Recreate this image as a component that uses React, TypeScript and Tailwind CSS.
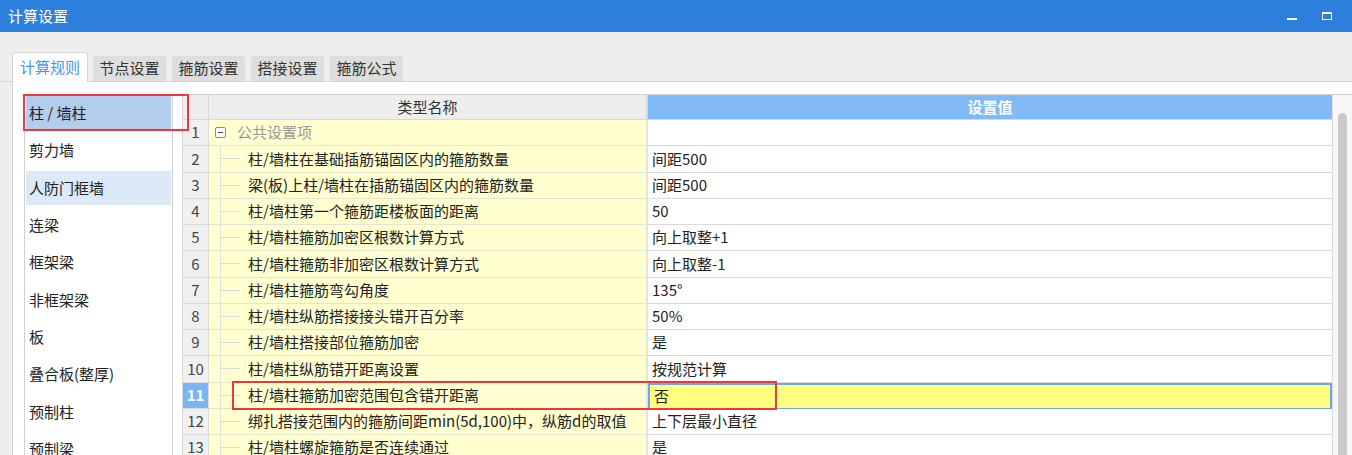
const items = ["柱 / 墙柱", "剪力墙", "人防门框墙", "连梁", "框架梁", "非框架梁", "板", "叠合板(整厚)", "预制柱", "预制梁"];

const rows: [string, string][] = [
  ["柱/墙柱在基础插筋锚固区内的箍筋数量", "间距500"],
  ["梁(板)上柱/墙柱在插筋锚固区内的箍筋数量", "间距500"],
  ["柱/墙柱第一个箍筋距楼板面的距离", "50"],
  ["柱/墙柱箍筋加密区根数计算方式", "向上取整+1"],
  ["柱/墙柱箍筋非加密区根数计算方式", "向上取整-1"],
  ["柱/墙柱箍筋弯勾角度", "135°"],
  ["柱/墙柱纵筋搭接接头错开百分率", "50%"],
  ["柱/墙柱搭接部位箍筋加密", "是"],
  ["柱/墙柱纵筋错开距离设置", "按规范计算"],
  ["柱/墙柱箍筋加密范围包含错开距离", "否"],
  ["绑扎搭接范围内的箍筋间距min(5d,100)中，纵筋d的取值", "上下层最小直径"],
  ["柱/墙柱螺旋箍筋是否连续通过", "是"],
];

const tabs = ["节点设置", "箍筋设置", "搭接设置", "箍筋公式"];

export default function App() {
  return (
    <div className="relative w-[1352px] h-[455px] overflow-hidden bg-[#eeeeee] text-[#222] font-['Noto_Sans_CJK_SC','Noto_Sans',sans-serif] text-[14px]">
      {/* title bar */}
      <div className="h-[32px] bg-[#2c7fdd] flex items-center justify-between pl-[8px] pr-[20px] text-white text-[15px]">
        <span>计算设置</span>
        <div className="flex items-center gap-[25px]">
          <div className="w-[10px] h-[2px] bg-white mt-[6px]" />
          <div className="w-[10px] h-[8px] border border-white border-t-2" />
        </div>
      </div>

      {/* tabs */}
      <div className="flex items-end pl-[12px] h-[50px] border-b border-[#d4d4d4]">
        <div className="h-[30px] w-[76px] bg-white border border-b-0 border-[#d6d6d6] rounded-t-[3px] flex items-center justify-center text-[#4596ee] text-[15px] -mb-px">
          计算规则
        </div>
        <div className="flex gap-[6px] ml-[5px]">
          {tabs.map((t) => (
            <div key={t} className="h-[25px] w-[73px] bg-[#dedede] rounded-t-[3px] flex items-center justify-center text-[#333] text-[15px]">
              {t}
            </div>
          ))}
        </div>
      </div>

      {/* content */}
      <div className="ml-[12px] h-[373px] bg-white border-l border-[#d4d4d4] flex pl-[11px] pt-[12px]">
        {/* left list */}
        <div className="w-[149px] border-x border-[#d0d0d0] flex flex-col gap-[3.4px] pt-[2px] px-px">
          {items.map((it, i) => (
            <div
              key={it}
              className={`h-[34px] shrink-0 flex items-center pl-[3px] text-[15px] ${i === 0 ? "bg-[#b3cdee]" : i === 2 ? "bg-[#dce9f9]" : ""}`}
            >
              {it}
            </div>
          ))}
        </div>

        {/* table */}
        <div className="ml-[9px] flex-1 flex border-t border-[#d0d0d0]">
          <div className="flex-1 flex flex-col">
            {/* header */}
            <div className="h-[25px] shrink-0 grid grid-cols-[27px_439px_1fr] border-b border-[#d8d8d8]">
              <div className="bg-[#eeeeee] border-x border-[#d8d8d8]" />
              <div className="bg-[#eeeeee] border-r-2 border-[#d8d8d8] flex items-center justify-center text-[#333] text-[15px]">类型名称</div>
              <div className="bg-[#80bbf7] flex items-center justify-center text-white text-[15px] font-bold">设置值</div>
            </div>
            {/* row 1 */}
            <div className="h-[26.25px] shrink-0 grid grid-cols-[27px_439px_1fr]">
              <div className="bg-[#f0f0f0] border-x border-b border-[#dadada] flex items-center justify-center text-[15px] text-[#444]">1</div>
              <div className="bg-[#ffffd0] border-r-2 border-b border-[#e4e4d0] flex items-center pl-[6px]">
                <div className="w-[11px] h-[11px] border border-[#888] rounded-[2px] flex items-center justify-center bg-white">
                  <div className="w-[5px] h-px bg-[#444]" />
                </div>
                <span className="ml-[11px] text-[#999] text-[15px]">公共设置项</span>
              </div>
              <div className="bg-white border-b border-[#dadada]" />
            </div>
            {rows.map(([name, val], i) => {
              const n = i + 2;
              const sel = n === 11;
              return (
                <div key={n} className="h-[26.25px] shrink-0 grid grid-cols-[27px_439px_1fr]">
                  <div className={`border-x border-b border-[#dadada] flex items-center justify-center text-[15px] ${sel ? "bg-[#7ab6f4] text-white font-bold" : "bg-[#f0f0f0] text-[#444]"}`}>
                    {n}
                  </div>
                  <div className="bg-[#ffffd0] border-r-2 border-b border-[#e4e4d0] flex items-stretch pl-[11px]">
                    <div className="w-[20px] border-l border-[#e0e0e0] flex items-center">
                      <div className="w-full h-px bg-[#d8d8d8]" />
                    </div>
                    <span className="ml-[8px] flex items-center text-[15px] whitespace-nowrap">{name}</span>
                  </div>
                  <div className={`flex items-center pl-[4px] text-[15px] border-b ${sel ? "bg-[#ffff80] border-2 border-[#6aa7e8]" : "bg-white border-[#dadada]"}`}>
                    {val}
                  </div>
                </div>
              );
            })}
          </div>
          {/* scrollbar */}
          <div className="w-[20px] bg-[#f7f7f7] border-l border-[#dcdcdc] pt-[18px] flex justify-center">
            <div className="w-[9px] h-full bg-[#c9c9c9] rounded-t-full" />
          </div>
        </div>
      </div>

      {/* highlight boxes */}
      <div className="absolute left-[23px] top-[94px] w-[166px] h-[37px] border-2 border-[#f0363a]" />
      <div className="absolute left-[232px] top-[381px] w-[545px] h-[29px] border-2 border-[#f0363a]" />
    </div>
  );
}
